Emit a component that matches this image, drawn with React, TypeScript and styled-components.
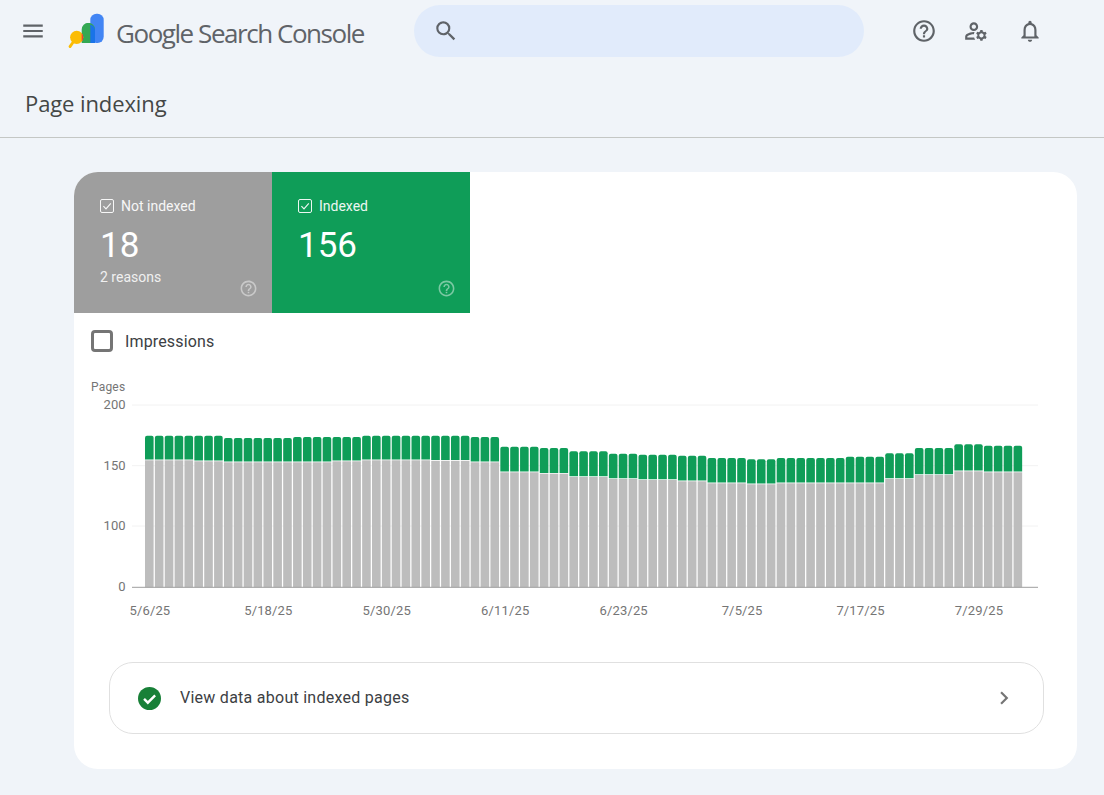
import React from 'react';
import styled, { createGlobalStyle } from 'styled-components';
import {
  MdChevronRight,
  MdMenu,
  MdOutlineHelpOutline,
  MdOutlineManageAccounts,
  MdOutlineNotifications,
  MdSearch,
} from 'react-icons/md';

const GlobalStyle = createGlobalStyle`
  html, body {
    margin: 0;
    padding: 0;
    background: #f0f4f9;
    font-family: Roboto, "Liberation Sans", sans-serif;
  }
`;

const Page = styled.div`
  width: 1104px;
  height: 795px;
  overflow: hidden;
`;

const TopBar = styled.header`
  display: flex;
  align-items: center;
  height: 62px;
`;

const MenuButton = styled.div`
  display: flex;
  color: #5f6368;
  margin-left: 20px;
  font-size: 26px;
`;

const Brand = styled.div`
  display: flex;
  align-items: center;
  margin-left: 22px;
  width: 346px;
`;

const BrandName = styled.span`
  margin: 3px 0 0 10px;
  font-family: "Open Sans", sans-serif;
  font-size: 26px;
  letter-spacing: -1.45px;
  color: #5f6368;
  white-space: nowrap;
`;

const SearchBox = styled.div`
  display: flex;
  align-items: center;
  width: 450px;
  height: 52px;
  padding-left: 19px;
  box-sizing: border-box;
  border-radius: 26px;
  background: #e1ebfb;
  color: #5f6368;
  font-size: 26px;
`;

const TopIcons = styled.div`
  display: flex;
  align-items: center;
  gap: 26px;
  margin-left: 47px;
  color: #5f6368;
`;

const TopIcon = styled.span`
  display: flex;
  font-size: 26px;

  &:last-child {
    margin-left: 2px;
  }
`;

const TitleBar = styled.div`
  height: 76px;
  padding-left: 25px;
  box-sizing: border-box;
  border-bottom: 1px solid #c4c7c5;
`;

const Title = styled.h1`
  margin: 0;
  padding-top: 25px;
  font-family: "Open Sans", sans-serif;
  font-size: 22px;
  line-height: 32px;
  font-weight: 400;
  letter-spacing: -0.1px;
  color: #444746;
`;

const Card = styled.main`
  width: 1003px;
  margin: 34px 0 0 74px;
  padding-bottom: 35px;
  border-radius: 24px;
  background: #fff;
  overflow: hidden;
`;

const Tiles = styled.div`
  display: flex;
`;

const Tile = styled.div<{ $color: string }>`
  position: relative;
  width: 198px;
  height: 141px;
  padding: 25px 26px 0;
  box-sizing: border-box;
  background: ${(props) => props.$color};
  color: #fff;
`;

const TileLabel = styled.div`
  display: flex;
  align-items: center;
  gap: 7px;
  font-size: 14px;
  line-height: 18px;
  opacity: 0.92;
`;

const TileCheck = styled.span`
  display: flex;
  width: 14px;
  height: 14px;
  box-sizing: border-box;
  border: 1px solid #fff;
  border-radius: 2px;
`;

const TileValue = styled.div`
  margin-top: 10px;
  font-size: 35px;
  line-height: 42px;
  font-weight: 400;
`;

const TileNote = styled.div`
  margin-top: 1px;
  font-size: 14px;
  line-height: 18px;
  opacity: 0.85;
`;

const TileHelp = styled.span`
  position: absolute;
  right: 14px;
  bottom: 15px;
  display: flex;
  font-size: 19px;
  opacity: 0.45;
`;

const MetricRow = styled.label`
  display: flex;
  align-items: center;
  gap: 12px;
  height: 22px;
  margin: 17px 0 0 17px;
  font-size: 16px;
  letter-spacing: 0.15px;
  color: #3c4043;
`;

const MetricBox = styled.span`
  width: 22px;
  height: 22px;
  box-sizing: border-box;
  border: 3px solid #757575;
  border-radius: 4px;
`;

const ChartFrame = styled.svg`
  display: block;
  margin-top: 23px;
  font-family: Roboto, "Liberation Sans", sans-serif;
`;

const LinkRow = styled.div`
  display: flex;
  align-items: center;
  height: 72px;
  margin: 37px 33px 0 35px;
  padding: 0 26px 0 28px;
  box-sizing: border-box;
  border: 1px solid #e0e0e0;
  border-radius: 24px;
`;

const LinkText = styled.span`
  flex: 1;
  margin-left: 19px;
  padding-bottom: 2px;
  font-size: 16px;
  letter-spacing: 0.26px;
  color: #3c4043;
`;

const LinkChevron = styled.span`
  display: flex;
  color: #757575;
  font-size: 26px;
`;

// runs of bars: how many, y of the green top, y of the grey top (page pixels)
const barRuns: [number, number, number][] = [
  [5, 435.7, 460.3],
  [3, 435.7, 461.3],
  [7, 438, 462.3],
  [4, 437, 462.3],
  [3, 437, 461.3],
  [7, 435.7, 460.3],
  [4, 435.7, 460.8],
  [3, 437, 462.3],
  [4, 446.7, 472.3],
  [3, 448, 473.7],
  [4, 451.3, 477],
  [3, 453.7, 479],
  [4, 454.7, 480],
  [3, 455.7, 481.3],
  [4, 458, 483.3],
  [3, 459.3, 484.3],
  [7, 458, 483.3],
  [4, 456.7, 483.3],
  [3, 453.3, 479],
  [4, 448, 475],
  [3, 444.3, 471.3],
  [4, 445.7, 472.3],
];

const bars = barRuns.flatMap(([count, top, mid]) =>
  Array.from({ length: count }, () => ({ top, mid })),
);

const BAR_X = 145;
const BAR_PITCH = 9.87;
const BAR_W = 8.6;
const BASE_Y = 587.3;

const yTicks = [
  { label: '200', y: 405 },
  { label: '150', y: 465.7 },
  { label: '100', y: 526 },
  { label: '0', y: BASE_Y },
];

const dates = ['5/6/25', '5/18/25', '5/30/25', '6/11/25', '6/23/25', '7/5/25', '7/17/25', '7/29/25'];

function greenBar(x: number, top: number, bottom: number) {
  const r = 2;
  return `M${x} ${bottom}V${top + r}Q${x} ${top} ${x + r} ${top}H${x + BAR_W - r}Q${x + BAR_W} ${top} ${x + BAR_W} ${top + r}V${bottom}Z`;
}

function PagesChart() {
  return (
    <ChartFrame width="1003" height="250" viewBox="74 375 1003 250">
      <text x="91" y="390.5" fontSize="12" letterSpacing="0.2" fill="#757575">
        Pages
      </text>
      {yTicks.map((tick) => (
        <g key={tick.label}>
          {tick.label !== '0' && (
            <line x1="132" x2="1038" y1={tick.y} y2={tick.y} stroke="#f2f2f2" />
          )}
          <text x="125.5" y={tick.y + 4} fontSize="13" textAnchor="end" fill="#757575">
            {tick.label}
          </text>
        </g>
      ))}
      {bars.map((bar, i) => {
        const x = BAR_X + i * BAR_PITCH;
        return (
          <g key={i}>
            <path d={greenBar(x, bar.top, bar.mid - 0.7)} fill="#0f9d58" />
            <rect x={x} y={bar.mid} width={BAR_W} height={BASE_Y - bar.mid} fill="#bdbdbd" />
          </g>
        );
      })}
      <line x1="132" x2="1038" y1={BASE_Y} y2={BASE_Y} stroke="#9e9e9e" />
      {dates.map((date, i) => (
        <text
          key={date}
          x={149.9 + i * 118.44}
          y="615"
          fontSize="13"
          letterSpacing="0.15"
          textAnchor="middle"
          fill="#757575"
        >
          {date}
        </text>
      ))}
    </ChartFrame>
  );
}

function SearchConsoleLogo() {
  return (
    <svg width="38" height="38" viewBox="68 14 38 38">
      <rect x="90.3" y="15.7" width="13.4" height="29.3" rx="6.2" fill="#4285f4" />
      <path d="M88.4 24.7a6.7 6.7 0 0 0-6.7 6.7V45H95V31.4a6.7 6.7 0 0 0-6.7-6.7Z" fill="#34a853" />
      <path d="M90.3 26.5a6.7 6.7 0 0 1 4.7 4.9V45h-4.7Z" fill="#1a73e8" />
      <circle cx="76.7" cy="39.3" r="6.6" fill="#fbbc04" />
      <path d="M81.7 35v8.6a6.6 6.6 0 0 0 0-8.6Z" fill="#ea4335" />
      <path d="M73.6 43.5 70 48.6" stroke="#fbbc04" strokeWidth="2.8" strokeLinecap="round" />
    </svg>
  );
}

function CheckMark() {
  return (
    <svg width="12" height="12" viewBox="0 0 12 12">
      <path d="M2.4 6.2 5 8.8l4.8-5.4" fill="none" stroke="#fff" strokeWidth="1.2" />
    </svg>
  );
}

function StatusCheck() {
  return (
    <svg width="23" height="23" viewBox="0 0 22 22">
      <circle cx="11" cy="11" r="11" fill="#188038" />
      <path d="M5.8 11.4 9.4 15l7-7" fill="none" stroke="#fff" strokeWidth="2.3" />
    </svg>
  );
}

export default function App() {
  return (
    <Page>
      <GlobalStyle />
      <TopBar>
        <MenuButton>
          <MdMenu />
        </MenuButton>
        <Brand>
          <SearchConsoleLogo />
          <BrandName>Google Search Console</BrandName>
        </Brand>
        <SearchBox>
          <MdSearch />
        </SearchBox>
        <TopIcons>
          <TopIcon>
            <MdOutlineHelpOutline />
          </TopIcon>
          <TopIcon>
            <MdOutlineManageAccounts />
          </TopIcon>
          <TopIcon>
            <MdOutlineNotifications />
          </TopIcon>
        </TopIcons>
      </TopBar>
      <TitleBar>
        <Title>Page indexing</Title>
      </TitleBar>
      <Card>
        <Tiles>
          <Tile $color="#9e9e9e">
            <TileLabel>
              <TileCheck>
                <CheckMark />
              </TileCheck>
              Not indexed
            </TileLabel>
            <TileValue>18</TileValue>
            <TileNote>2 reasons</TileNote>
            <TileHelp>
              <MdOutlineHelpOutline />
            </TileHelp>
          </Tile>
          <Tile $color="#0f9d58">
            <TileLabel>
              <TileCheck>
                <CheckMark />
              </TileCheck>
              Indexed
            </TileLabel>
            <TileValue>156</TileValue>
            <TileHelp>
              <MdOutlineHelpOutline />
            </TileHelp>
          </Tile>
        </Tiles>
        <MetricRow>
          <MetricBox />
          Impressions
        </MetricRow>
        <PagesChart />
        <LinkRow>
          <StatusCheck />
          <LinkText>View data about indexed pages</LinkText>
          <LinkChevron>
            <MdChevronRight />
          </LinkChevron>
        </LinkRow>
      </Card>
    </Page>
  );
}
